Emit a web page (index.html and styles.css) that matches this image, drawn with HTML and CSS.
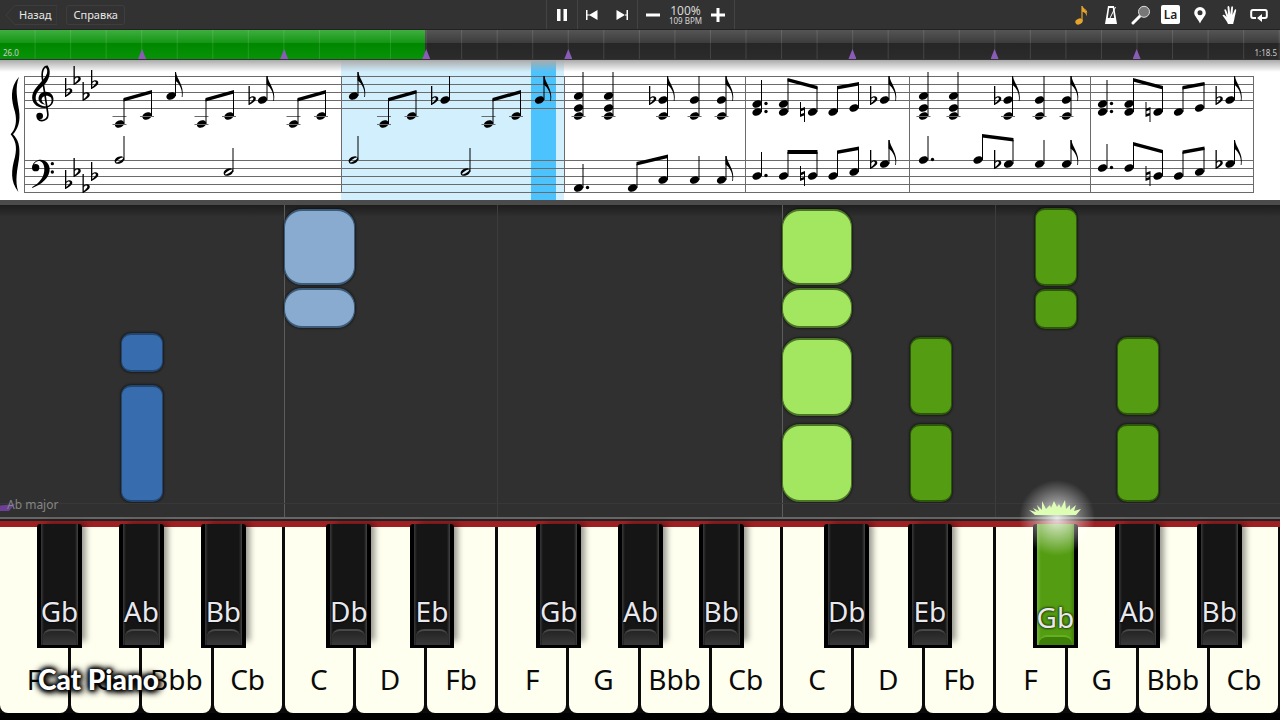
FILE: index.html
```html
<!DOCTYPE html>
<html lang="ru">
<head>
    <meta charset="UTF-8">
    <meta name="viewport" content="width=device-width, initial-scale=1.0">
    <title>Cat Piano</title>
    <link rel="stylesheet" href="styles.css">
</head>
<body>

<header class="toolbar">
    <nav class="menu">
        <button class="menu-button back">
            <svg class="back-shape" viewBox="0 0 54 20" preserveAspectRatio="none" aria-hidden="true"><path d="M10 .5H53.500V19.500H10L1 10Z"/></svg>
            Назад
        </button>
        <button class="menu-button help">Справка</button>
    </nav>

    <div class="transport">
        <button class="play" aria-label="Pause">
            <svg width="12" height="14" viewBox="0 0 12 14"><path d="M1 1h3.500v12H1zM7.500 1H11v12H7.500z"/></svg>
        </button>
        <div class="skip">
            <button aria-label="Previous">
                <svg width="12" height="12" viewBox="0 0 12 12"><path d="M0 1h1.500v10H0zM11.500 1v10L3 6zM1 5.500h3v1H1z"/></svg>
            </button>
            <button aria-label="Next">
                <svg width="12" height="12" viewBox="0 0 12 12"><path d="M10.500 1H12v10h-1.500zM.5 1v10L9 6zM8 5.500h3v1H8z"/></svg>
            </button>
        </div>
        <div class="tempo">
            <button aria-label="Slower">
                <svg width="14" height="14" viewBox="0 0 14 14"><path d="M0 5.500h14v3H0z"/></svg>
            </button>
            <div class="tempo-value">
                <span class="percent">100%</span>
                <span class="bpm">109 BPM</span>
            </div>
            <button aria-label="Faster">
                <svg width="14" height="14" viewBox="0 0 14 14"><path d="M0 5.500h14v3H0zM5.500 0h3v14h-3z"/></svg>
            </button>
        </div>
    </div>

    <div class="tools">
        <button aria-label="Notes">
            <svg class="gold" width="14" height="20" viewBox="0 0 14 20"><ellipse cx="4" cy="16.500" rx="3.800" ry="2.800" transform="rotate(-25 4 16.500)"/><path d="M6.400 1h1.200c.2 3 5 4 4.400 10.500C11.200 8.500 9 7 7.600 6.800V16H6.400z"/><path class="gold-line" d="M7 1.500c1 3 4.800 2.500 4.800 6"/></svg>
        </button>
        <button aria-label="Metronome">
            <svg width="14" height="20" viewBox="0 0 14 20"><path fill-rule="evenodd" d="M4 1h6l3 18H1zM5.200 3L3.800 13h6.400L8.800 3z"/><path class="thin" d="M6 13L11.500 2"/></svg>
        </button>
        <button aria-label="Zoom">
            <svg width="20" height="20" viewBox="0 0 20 20"><path class="handle" d="M2 18L9 11"/><circle class="lens" cx="13" cy="6.800" r="5.500"/></svg>
        </button>
        <button aria-label="Note names"><span class="la">La</span></button>
        <button aria-label="Bookmark">
            <svg width="14" height="18" viewBox="0 0 14 18"><path fill-rule="evenodd" d="M7 1a5.800 5.800 0 0 1 5.800 5.800C12.800 10 9 13 7 17.500 5 13 1.200 10 1.200 6.800A5.800 5.800 0 0 1 7 1zm0 3.200a2.500 2.500 0 1 0 0 5 2.500 2.500 0 0 0 0-5z"/></svg>
        </button>
        <button aria-label="Hands">
            <svg width="16" height="20" viewBox="0 0 16 20"><path d="M6 19C5 16 2 12.500.500 10.500c.5-1 1.700-.8 2.500 0L4.500 12 2.300 5c.1-1 1.400-1.100 1.800 0l2 5L5.500 2c.2-1.200 1.600-1.200 1.900 0l.8 7.500L9.300 2c.3-1.100 1.600-1 1.700.2L10.500 10l2.200-5.300c.5-1 1.700-.5 1.500.6L12.500 13c-.3 2.500-1 4-1.300 6z"/></svg>
        </button>
        <button aria-label="Loop">
            <svg width="18" height="14" viewBox="0 0 18 14"><path class="loop" d="M6 10H3Q1.200 10 1.200 8V4Q1.200 2 3 2h12q1.800 0 1.800 2v4q0 2-1.800 2h-3"/><path d="M7 10l5-4v8z"/></svg>
        </button>
    </div>
</header>

<div class="timeline">
    <div class="played"></div>
    <div class="ticks"></div>
    <span class="time">26.0</span>
    <span class="time">1:18.5</span>
    <i class="marker m1"></i>
    <i class="marker m2"></i>
    <i class="marker m3"></i>
    <i class="marker m4"></i>
    <i class="marker m6"></i>
    <i class="marker m7"></i>
    <i class="marker m8"></i>
</div>

<section class="score" aria-label="Score">
    <svg viewBox="0 0 1280 140">
        <defs>
            <ellipse id="head" rx="4.800" ry="3.600" transform="rotate(-22)"/>
            <path id="half" fill-rule="evenodd" d="M-4.600 2.200C-6-1-1-4.200 2.500-3.600 6.500-2.600 4.500 2 1 3.300-1.500 4.200-4 4-4.600 2.200zM-3.400 2.300C-2 3.300 4.300-.8 3.800-2.200 2.800-3.500-4 .8-3.400 2.300z"/>
            <path id="ledger" class="line" d="M-7 .5H7"/>
            <path id="stem" class="stem" d="M4.500 0V-24"/>
            <path id="flag" d="M4-24h1C5.500-17 13.500-11 11.500 1H10.700C12-6 8.500-12.500 4-15.500z"/>
            <path id="flat" fill-rule="evenodd" d="M-.5-14H.8V-2.500C3-4.500 7-4.400 6.800-1 6.500 1.700 2.800 3.200.3 5H-.5zM.8-1V3C2.800 1.500 4.500-.2 4.400-1.700 4.200-3.200 1.700-2.700.8-1z"/>
            <path id="natural" fill-rule="evenodd" d="M-2.500-10h1v6.500L2.500-5V10h-1V3.500L-2.500 5zM-1.500-.8V2L1.500 1v-3z"/>
            <g id="key">
                <use href="#flat" x="65.500" y="32"/><use href="#flat" x="74" y="20"/>
                <use href="#flat" x="83" y="36"/><use href="#flat" x="91.500" y="24"/>
            </g>
            <!-- two beamed eighths, low A then C -->
            <g id="low-pair">
                <use href="#head" y="64"/><use href="#head" x="27.500" y="56"/>
                <use href="#ledger" y="56"/><use href="#ledger" y="64"/><use href="#ledger" x="27.500" y="56"/>
                <path class="stem" d="M4.500 64V39M32 56V31"/>
                <path d="M4 38L32.500 30V33.500L4 41.500z"/>
            </g>
            <g id="eighth"><use href="#head"/><use href="#stem"/><use href="#flag"/></g>
            <g id="quarter"><use href="#head"/><use href="#stem"/></g>
            <g id="minim"><use href="#half"/><use href="#stem"/></g>
            <g id="triad">
                <use href="#quarter" y="36"/><use href="#head" y="48"/><use href="#head" y="56"/>
                <use href="#ledger" y="56"/><path class="stem" d="M4.500 36V56"/>
            </g>
            <g id="fifth">
                <use href="#quarter" y="40"/><use href="#head" y="56"/>
                <use href="#ledger" y="56"/><path class="stem" d="M4.500 40V56"/>
            </g>
            <g id="bar-chords">
                <use href="#triad" x="578.500"/><use href="#triad" x="608.500"/>
                <use href="#flat" x="649.500" y="40"/>
                <use href="#fifth" x="663"/><use href="#flag" x="663" y="40"/>
                <use href="#fifth" x="694.500"/>
                <use href="#fifth" x="721.500"/><use href="#flag" x="721.500" y="40"/>
            </g>
            <g id="bar-melody">
                <use href="#head" x="757" y="44"/><use href="#head" x="757" y="52"/>
                <circle cx="766" cy="43.500" r="1.700"/><circle cx="766" cy="51.500" r="1.700"/>
                <use href="#head" x="783.500" y="44"/><use href="#head" x="783.500" y="52"/>
                <use href="#natural" x="802.500" y="52"/><use href="#head" x="812.500" y="52"/>
                <path class="stem" d="M761.500 52V20M788 52V19M817 52V27"/>
                <path d="M787.500 18L817.500 26v3.500L787.500 21.500z"/>
                <use href="#head" x="833" y="52"/><use href="#head" x="854" y="48"/>
                <path class="stem" d="M837.500 52V27M858.500 48V23"/>
                <path d="M837 26l22-4v3.500l-22 4z"/>
                <use href="#flat" x="870.500" y="40"/><use href="#eighth" x="884.500" y="40"/>
            </g>
            <linearGradient id="shade" x2="0" y2="1">
                <stop offset="0" stop-color="#aaa"/>
                <stop offset="1" stop-color="#aaa" stop-opacity="0"/>
            </linearGradient>
        </defs>

        <rect class="current-bar" x="341" width="223" height="140"/>
        <rect class="current-beat" x="531" width="25" height="140"/>
        <rect fill="url(#shade)" width="1280" height="12"/>

        <!-- staves and bar lines -->
        <path class="line" d="M24 16.500H1253M24 24.500H1253M24 32.500H1253M24 40.500H1253M24 48.500H1253M24 100.500H1253M24 108.500H1253M24 116.500H1253M24 124.500H1253M24 132.500H1253"/>
        <path class="line" d="M24.500 16V133M341.500 16V133M564.500 16V133M745.500 16V133M909.500 16V133M1090.500 16V133M1253.500 16V133"/>

        <!-- brace and clefs -->
        <g transform="scale(.3333)">
            <path d="M57 50C28 84 34 120 45 156 52 186 46 208 32 223 46 240 52 260 45 290 34 330 30 362 55 396 44 362 52 330 57 296 62 258 54 238 39 223 54 206 62 186 57 150 52 116 44 84 57 50z"/>
            <circle cx="119" cy="168" r="10"/>
            <path class="clef-thin" d="M112 175C122 188 148 182 143 157L127 54C124 28 135 17 142 20"/>
            <path d="M142 16C154 30 150 54 137 70 124 84 107 96 107 114 107 130 124 140 140 139 155 136 158 120 152 112 142 102 124 108 125 120 126 127 131 131 137 134 120 133 112 120 117 108 124 91 150 92 158 107 166 126 154 144 133 144 108 144 93 126 97 106 101 82 134 62 141 40 143 30 141 24 136 24z"/>
            <circle cx="107" cy="323" r="11"/>
            <path d="M97 319C101 293 144 290 149 325 151 354 122 375 97 384 96 382 96 382 97 381 120 368 134 350 133 324 131 298 108 297 101 315z"/>
            <circle cx="157" cy="311" r="5"/><circle cx="157" cy="336" r="5"/>
        </g>
        <use href="#key"/>
        <use href="#key" y="92"/>

        <!-- treble -->
        <use href="#low-pair" x="119.500"/>
        <use href="#eighth" x="171" y="36"/>
        <use href="#low-pair" x="201.500"/>
        <use href="#flat" x="249" y="40"/><use href="#eighth" x="262.500" y="40"/>
        <use href="#low-pair" x="293.500"/>
        <use href="#eighth" x="353.500" y="36"/>
        <use href="#low-pair" x="384"/>
        <use href="#flat" x="431.500" y="40"/><use href="#quarter" x="445" y="40"/>
        <use href="#low-pair" x="488.500"/>
        <use href="#eighth" x="539.500" y="40"/>
        <use href="#bar-chords"/>
        <use href="#bar-melody"/>
        <use href="#bar-chords" x="345"/>
        <use href="#bar-melody" x="345.500"/>

        <!-- bass -->
        <use href="#minim" x="119.500" y="100"/><use href="#minim" x="228.500" y="112"/>
        <use href="#minim" x="353.500" y="100"/><use href="#minim" x="465.500" y="112"/>

        <use href="#quarter" x="578.500" y="128"/><circle cx="587.500" cy="127.500" r="1.700"/>
        <use href="#quarter" x="632.500" y="128"/><use href="#quarter" x="663" y="120"/>
        <path d="M636.500 102L668 94.500V98L636.500 105.500z"/>
        <use href="#quarter" x="694.500" y="120"/><use href="#eighth" x="721.500" y="120"/>

        <use href="#quarter" x="757" y="116"/><circle cx="766" cy="115.500" r="1.700"/>
        <use href="#quarter" x="783.500" y="116"/><use href="#natural" x="802.500" y="116"/><use href="#quarter" x="812.500" y="116"/>
        <path d="M787.500 90h30v4h-30z"/>
        <use href="#quarter" x="833" y="116"/><use href="#quarter" x="854" y="112"/>
        <path d="M837 90.500l22-4V90l-22 4z"/>
        <use href="#flat" x="870.500" y="104"/><use href="#eighth" x="884.500" y="104"/>

        <use href="#quarter" x="923.500" y="100"/><circle cx="932.500" cy="99.500" r="1.700"/>
        <use href="#quarter" x="978" y="100"/><use href="#flat" x="994.500" y="104"/><use href="#quarter" x="1008.500" y="104"/>
        <path d="M982 74l31.500 4v3.500L982 77.500z"/>
        <use href="#quarter" x="1039.500" y="104"/><use href="#eighth" x="1066.500" y="104"/>

        <use href="#quarter" x="1102.500" y="108"/><circle cx="1111.500" cy="107.500" r="1.700"/>
        <use href="#quarter" x="1129" y="108"/><use href="#natural" x="1148" y="116"/><use href="#quarter" x="1158" y="116"/>
        <path d="M1133 82l30 8v3.500l-30-8z"/>
        <use href="#quarter" x="1178.500" y="116"/><use href="#quarter" x="1199.500" y="112"/>
        <path d="M1182.500 90.500l22-4V90l-22 4z"/>
        <use href="#flat" x="1216" y="104"/><use href="#eighth" x="1230" y="104"/>
    </svg>
</section>

<main class="roll">
    <i class="octave c1"></i>
    <i class="octave dim f1"></i>
    <i class="octave c2"></i>
    <i class="octave dim f2"></i>

    <!-- top and height come from the note's start and length -->
    <div class="note blue ab1" style="top: 41%; height: 12.5%"></div>
    <div class="note blue ab1" style="top: 57.7%; height: 37.5%"></div>
    <div class="note wide sky c1" style="top: 1.3%; height: 24.4%"></div>
    <div class="note wide sky c1" style="top: 26.6%; height: 12.8%"></div>
    <div class="note wide lime c2" style="top: 1.3%; height: 24.4%"></div>
    <div class="note wide lime c2" style="top: 26.6%; height: 12.8%"></div>
    <div class="note wide lime c2" style="top: 42.6%; height: 25%"></div>
    <div class="note wide lime c2" style="top: 70.2%; height: 25%"></div>
    <div class="note green eb3" style="top: 42.3%; height: 25%"></div>
    <div class="note green eb3" style="top: 70.2%; height: 25%"></div>
    <div class="note green gb3" style="top: 1%; height: 25%"></div>
    <div class="note green gb3" style="top: 27%; height: 12.8%"></div>
    <div class="note green ab3" style="top: 42.3%; height: 25%"></div>
    <div class="note green ab3" style="top: 70.2%; height: 25%"></div>

    <p class="scale">Ab major</p>
</main>

<section class="keyboard" aria-label="Keyboard">
    <div class="white-keys">
        <button>F</button>
        <button>G</button>
        <button>Bbb</button>
        <button>Cb</button>
        <button>C</button>
        <button>D</button>
        <button>Fb</button>
        <button>F</button>
        <button>G</button>
        <button>Bbb</button>
        <button>Cb</button>
        <button>C</button>
        <button>D</button>
        <button>Fb</button>
        <button>F</button>
        <button>G</button>
        <button>Bbb</button>
        <button>Cb</button>
    </div>
    <button class="black gb1"><span>Gb</span></button>
    <button class="black ab1"><span>Ab</span></button>
    <button class="black bb1"><span>Bb</span></button>
    <button class="black db2"><span>Db</span></button>
    <button class="black eb2"><span>Eb</span></button>
    <button class="black gb2"><span>Gb</span></button>
    <button class="black ab2"><span>Ab</span></button>
    <button class="black bb2"><span>Bb</span></button>
    <button class="black db3"><span>Db</span></button>
    <button class="black eb3"><span>Eb</span></button>
    <button class="black pressed gb3"><span>Gb</span></button>
    <button class="black ab3"><span>Ab</span></button>
    <button class="black bb3"><span>Bb</span></button>
    <div class="spark gb3">
        <svg viewBox="0 0 52 16" aria-hidden="true"><path d="M6 15L0 10l7 2-3-4 6 3-2-6 5 5 0-9 4 8 4-4 1 3 3-7 3 6 2-3 2 4 4-8 1 9 4-4 0 5 6-5-2 6 7-2-5 6z"/></svg>
    </div>
    <div class="watermark">Cat Piano</div>
</section>

</body>
</html>
```

FILE: styles.css
```css
* {
    box-sizing: border-box;
}
body {
    margin: 0;
    min-height: 100vh;
    display: flex;
    flex-direction: column;
    background: #303030;
    color: #fff;
    font-family: "Noto Sans", "Open Sans", sans-serif;
    overflow: hidden;
}
button {
    margin: 0;
    padding: 0;
    border: none;
    background: none;
    color: inherit;
    font: inherit;
    cursor: pointer;
}
svg {
    display: block;
    fill: #fff;
}

/* toolbar */
.toolbar {
    height: 29px;
    display: grid;
    grid-template-columns: 1fr auto 1fr;
    background: #323232;
}
.menu {
    display: flex;
    align-items: center;
    gap: 9px;
    padding-left: 5px;
    font-size: 11px;
    color: #e8e8e8;
}
.menu-button {
    position: relative;
    height: 20px;
    padding: 0 6px;
    border-radius: 3px;
}
.help {
    border: 1px solid #3e3e3e;
}
.back {
    padding-left: 14px;
}
.back-shape {
    position: absolute;
    inset: 0;
    width: 100%;
    height: 100%;
    fill: none;
    stroke: #3e3e3e;
}
.transport {
    display: flex;
    border-left: 1px solid #444;
}
.play, .skip, .tempo {
    display: flex;
    align-items: center;
    justify-content: space-around;
    border-right: 1px solid #444;
}
.play {
    width: 31px;
}
.skip {
    width: 60px;
}
.tempo {
    width: 97px;
    padding: 0 4px;
}
.tempo-value {
    display: flex;
    flex-direction: column;
    align-items: center;
    color: #d8d8d8;
}
.percent {
    font-size: 12px;
    line-height: 12px;
}
.bpm {
    font-size: 8px;
    line-height: 8px;
}
.tools {
    justify-self: end;
    display: flex;
    width: 207px;
    margin-right: 6px;
}
.tools button {
    flex: 1;
    display: flex;
    align-items: center;
    justify-content: center;
}
.gold {
    fill: #e5a52c;
}
.gold-line {
    fill: none;
    stroke: #e5a52c;
}
.thin {
    stroke: #fff;
    stroke-width: 1;
}
.handle {
    stroke: #fff;
    stroke-width: 3;
    stroke-linecap: round;
}
.lens {
    fill: #777;
    stroke: #ddd;
    stroke-width: 1;
}
.loop {
    fill: none;
    stroke: #fff;
    stroke-width: 2;
}
.la {
    width: 19px;
    height: 19px;
    border-radius: 2px;
    background: #fff;
    color: #222;
    font-size: 12px;
    font-weight: 600;
    line-height: 20px;
}

/* timeline */
.timeline {
    position: relative;
    height: 31px;
    display: flex;
    align-items: flex-end;
    justify-content: space-between;
    padding: 0 3px;
    border-top: 1px solid #222;
    border-bottom: 1px solid #333;
    background: linear-gradient(#555, #3c3c3c 45%, #262626 46%, #2b2b2b);
}
.played {
    position: absolute;
    inset: 0 auto 0 0;
    width: 33.2%;
    background: linear-gradient(#3fae3f, #149614 45%, #008800 46%, #079307);
}
.ticks {
    position: absolute;
    inset: 0;
    background: linear-gradient(90deg, transparent calc(100% - 1px), rgba(255, 255, 255, 0.12) 0);
    background-size: calc(100% / 36) 100%;
}
.time {
    position: relative;
    font-size: 8px;
    line-height: 12px;
    color: #ccc;
}
.marker {
    position: absolute;
    bottom: 0;
    width: 8px;
    height: 10px;
    margin-left: -4px;
    background: #8a5cb8;
    clip-path: polygon(50% 0, 100% 100%, 0 100%);
}
.m1 { left: 11.1%; }
.m2 { left: 22.2%; }
.m3 { left: 33.3%; }
.m4 { left: 44.4%; }
.m6 { left: 66.6%; }
.m7 { left: 77.7%; }
.m8 { left: 88.8%; }

/* score */
.score {
    background: #fff;
    border-bottom: 5px solid #4b4b4b;
}
.score svg {
    width: 100%;
    fill: #000;
}
.line {
    stroke: #6b6b6b;
    stroke-width: 1;
}
.stem {
    stroke: #000;
    stroke-width: 1;
}
.clef-thin {
    fill: none;
    stroke: #000;
    stroke-width: 5;
}
.current-bar {
    fill: #d2effd;
}
.current-beat {
    fill: #4dc3fd;
}

/* falling notes */
.roll {
    position: relative;
    z-index: 0;
    flex: 1;
    background: linear-gradient(#1d1d1d, #303030 12px);
}
.octave {
    position: absolute;
    top: 0;
    bottom: 0;
    width: 1px;
    background: #5c5c5c;
}
.dim {
    background: #3d3d3d;
}
.note {
    position: absolute;
    width: 3.3%;
    margin-left: 2px;
    border: solid;
    border-width: 2px 1px;
    border-radius: 10px;
    box-shadow: 0 0 2px 1px rgba(0, 0, 0, 0.45);
}
.wide {
    width: 5.5%;
    margin-left: 0;
    border-radius: 18px;
}
.blue { background: #376cae; border-color: #22466f; }
.sky { background: #88abcf; border-color: #3d5c7a; }
.lime { background: #a2e75f; border-color: #4c7528; }
.green { background: #549c11; border-color: #2d570b; }
.scale {
    position: absolute;
    left: 0;
    bottom: 0;
    margin: 0;
    padding-left: 7px;
    width: 100%;
    height: 14px;
    border-top: 1px solid #383838;
    font-size: 12px;
    line-height: 2px;
    color: #858585;
}
.scale::before {
    content: "";
    position: absolute;
    left: 0;
    top: 0;
    width: 15px;
    height: 7px;
    background: #6b3f96;
    clip-path: polygon(0 20%, 100% 0, 60% 100%, 0 100%);
    z-index: -1;
}

/* horizontal places shared by the keys and their notes */
.c1 { left: 22.2%; }
.f1 { left: 38.8%; }
.c2 { left: 61.1%; }
.f2 { left: 77.7%; }
.gb1 { left: 2.9%; }
.ab1 { left: 9.3%; }
.bb1 { left: 15.7%; }
.db2 { left: 25.5%; }
.eb2 { left: 32%; }
.gb2 { left: 41.9%; }
.ab2 { left: 48.3%; }
.bb2 { left: 54.6%; }
.db3 { left: 64.4%; }
.eb3 { left: 70.9%; }
.gb3 { left: 80.7%; }
.ab3 { left: 87.1%; }
.bb3 { left: 93.5%; }

/* keyboard */
.keyboard {
    position: relative;
    height: 203px;
    padding-bottom: 7px;
    border-top: 2px solid #666;
    background: #000;
}
.white-keys {
    display: flex;
    gap: 3px;
    height: 100%;
    padding-right: 2px;
    border-top: 2px solid #222;
    background: linear-gradient(#9e2023 6px, #0a0a0a 6px);
}
.white-keys button {
    flex: 1 1 0;
    margin-top: 6px;
    padding-top: 118px;
    border-radius: 0 0 8px 8px;
    background: #fffff0;
    color: #0a0a0a;
    font-size: 28px;
    line-height: 36px;
}
.black {
    position: absolute;
    top: 5px;
    width: 3.5%;
    height: 124px;
    padding-top: 69px;
    border: solid #000;
    border-width: 0 4px 3px;
    border-radius: 3px 3px 0 0;
    background: linear-gradient(90deg, #3a3a3a, #151515 3px calc(100% - 3px), #444);
    box-shadow: 7px -4px 6px -3px rgba(0, 0, 0, 0.4);
    color: #e8e8ee;
    font-size: 28px;
    line-height: 36px;
    display: flex;
    justify-content: center;
}
.black::after {
    content: "";
    position: absolute;
    left: 2px;
    right: 2px;
    bottom: 0;
    height: 14px;
    border-top: 2px solid #484848;
    border-radius: 8px 8px 0 0;
    background: linear-gradient(#242424, #393939);
}
.black span {
    position: relative;
    z-index: 1;
    text-shadow: 0 0 2px #000, 0 0 2px #000;
}
.pressed {
    padding-top: 75px;
    background: linear-gradient(90deg, #72b63a, #549c11 4px calc(100% - 4px), #3f7d0b);
    box-shadow: none;
}
.pressed::after {
    height: 8px;
    border-color: #65b021;
    background: #3d7f08;
}
.pressed span {
    text-shadow: 0 0 2px #1c3a03, 0 0 2px #1c3a03, 0 0 3px #1c3a03;
}

/* flash above the pressed key */
.spark {
    position: absolute;
    top: -19px;
    width: 52px;
    margin-left: -4px;
}
.spark::before {
    content: "";
    position: absolute;
    left: -10px;
    top: -20px;
    width: 76px;
    height: 76px;
    background: radial-gradient(closest-side, rgba(255, 255, 255, 0.85), rgba(255, 255, 255, 0.5) 40%, transparent);
}
.spark svg {
    position: relative;
    fill: #dcffb4;
}

.watermark {
    position: absolute;
    left: 38px;
    top: 144px;
    font-family: Lato, "Noto Sans", sans-serif;
    font-size: 28px;
    font-weight: 900;
    line-height: 32px;
    white-space: nowrap;
    text-shadow: 0 0 2px #000, 0 0 4px #000, 0 0 5px #000, 0 0 7px #000, 0 0 8px #000, 2px 2px 7px #000;
}
```
